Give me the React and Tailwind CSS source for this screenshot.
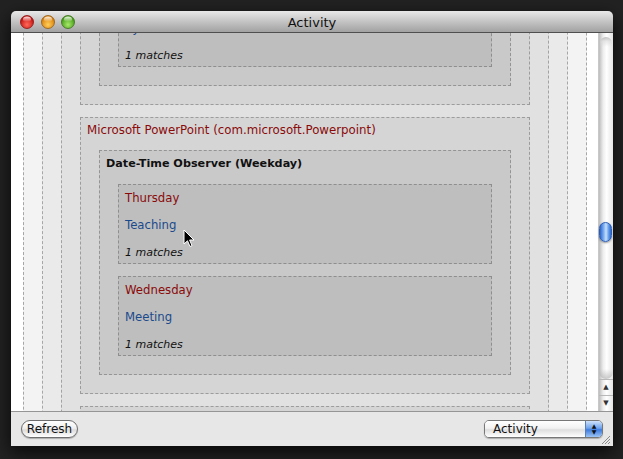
import React from 'react';

const Light = ({ from, to, rim }) => (
  <svg width="14" height="14" viewBox="0 0 14 14">
    <defs>
      <radialGradient id={`g${from}`} cx="50%" cy="70%" r="60%">
        <stop offset="0%" stopColor={from} />
        <stop offset="100%" stopColor={to} />
      </radialGradient>
      <linearGradient id={`h${from}`} x1="0" y1="0" x2="0" y2="1">
        <stop offset="0%" stopColor="#fff" stopOpacity="0.9" />
        <stop offset="100%" stopColor="#fff" stopOpacity="0" />
      </linearGradient>
    </defs>
    <circle cx="7" cy="7" r="6.5" fill={`url(#g${from})`} stroke={rim} strokeWidth="0.8" />
    <ellipse cx="7" cy="4.2" rx="4" ry="2.6" fill={`url(#h${from})`} />
  </svg>
);

const Entry = ({ day, activity, className }) => (
  <div className={`border border-dashed border-[#8e8e8e] bg-[#bebebe] pl-[6px] ${className}`}>
    <div className="h-[27px] flex items-center text-[11.7px] text-[#8a0a0a]">{day}</div>
    <div className="h-[27px] flex items-center text-[11.7px] text-[#1b4a8c]">{activity}</div>
    <div className="h-[24px] pt-[4px] flex items-center text-[11px] italic text-[#111]">1 matches</div>
  </div>
);

const Observer = ({ title, children }) => (
  <div className="mt-[7px] border border-dashed border-[#949494] bg-[#c9c9c9] px-[18px] pb-[18px]">
    <div className="h-[27px] -ml-[12px] flex items-center text-[11.2px] font-bold text-[#111]">{title}</div>
    <div className="mt-[6px]">{children}</div>
  </div>
);

const AppBox = ({ title, children, className }) => (
  <div className={`border border-dashed border-[#9c9c9c] bg-[#d5d5d5] px-[18px] pb-[18px] ${className}`}>
    <div className="h-[25px] -ml-[12px] flex items-center text-[11.8px] text-[#8a0a0a]">{title}</div>
    {children}
  </div>
);

export default function App() {
  return (
    <div className="w-[623px] h-[459px] bg-[#222222] pt-[11px] pl-[11px] font-['DejaVu_Sans',sans-serif] overflow-hidden">
      <div className="w-[602px] h-[435px] flex flex-col rounded-t-[5px] overflow-hidden shadow-[0_6px_18px_rgba(0,0,0,0.8)]">
        {/* title bar */}
        <div className="h-[22px] shrink-0 border-b border-[#4f4f4f] bg-gradient-to-b from-[#e9e9e9] via-[#c4c4c4] to-[#a2a2a2] grid grid-cols-[1fr_auto_1fr] items-center">
          <div className="flex items-center gap-[6.5px] pl-[9px]">
            <Light from="#ff6b5a" to="#c30d0d" rim="#8a1010" />
            <Light from="#ffcf5a" to="#d97c06" rim="#8f5a10" />
            <Light from="#a8e86a" to="#3f9a12" rim="#3c6d18" />
          </div>
          <div className="text-[13px] text-[#111] leading-none pt-[1px]">Activity</div>
          <div />
        </div>

        {/* content */}
        <div className="flex h-[378px] shrink-0">
          <div className="w-[587px] h-full overflow-hidden bg-white relative">
            <div className="mt-[-170px] pl-[12px] pr-[11px]">
              <div className="border border-dashed border-[#a6a6a6] bg-[#f3f3f3] px-[18px] pt-[18px]">
                <div className="border border-dashed border-[#a6a6a6] bg-[#eaeaea] px-[18px] pt-[18px]">
                  <div className="border border-dashed border-[#a2a2a2] bg-[#e1e1e1] px-[18px] pt-[18px] pb-[200px]">
                    <AppBox title="">
                      <Observer title="">
                        <Entry day="" activity="Synthesis" />
                      </Observer>
                    </AppBox>
                    <AppBox title="Microsoft PowerPoint (com.microsoft.Powerpoint)" className="mt-[12px]">
                      <Observer title="Date-Time Observer (Weekday)">
                        <Entry day="Thursday" activity="Teaching" />
                        <Entry day="Wednesday" activity="Meeting" className="mt-[12px]" />
                      </Observer>
                    </AppBox>
                    <div className="mt-[12px] h-[60px] border border-dashed border-[#9c9c9c] bg-[#d5d5d5]" />
                  </div>
                </div>
              </div>
            </div>
            {/* mouse pointer */}
            <svg className="absolute left-[172px] top-[196px]" width="12" height="19" viewBox="0 0 12 19">
              <path d="M1 1 L1 15 L4.5 11.8 L7 17.5 L9 16.6 L6.6 11 L11 11 Z" fill="#000" stroke="#fff" strokeWidth="1" strokeLinejoin="round" />
            </svg>
          </div>

          {/* scrollbar */}
          <div className="w-[15px] h-full flex flex-col bg-[linear-gradient(to_right,#bcbcbc,#eeeeee_30%,#ffffff_55%,#e4e4e4)] border-l border-[#c8c8c8]">
            <div className="h-[346px] relative">
              <div className="h-[10px] rounded-t-[7px] bg-[linear-gradient(to_bottom,#9a9a9a,#d8d8d8_40%,transparent)] mx-[1px] mt-[4px] opacity-60" />
              <div className="absolute left-[0px] top-[189px] w-[13px] h-[20px] rounded-full border border-[#2a5db8] bg-[linear-gradient(to_right,#2c63c9,#7fb1f4_35%,#c9e0fb_55%,#5d98ea_80%,#2e67cf)] shadow-[0_1px_2px_rgba(0,0,0,0.4)]" />
              <div className="absolute left-0 right-0 bottom-0 h-[10px] rounded-b-[7px] bg-[linear-gradient(to_top,#b0b0b0,transparent)] opacity-70" />
            </div>
            <div className="h-[16px] border-t border-[#b8b8b8] flex items-center justify-center text-[7px] text-[#333] leading-none">▲</div>
            <div className="h-[16px] border-t border-[#b8b8b8] flex items-center justify-center text-[7px] text-[#333] leading-none">▼</div>
          </div>
        </div>

        {/* bottom bar */}
        <div className="h-[35px] shrink-0 border-t border-[#959595] bg-[#e7e7e7] flex items-center justify-between pl-[10px] pr-[10px] relative">
          <button className="w-[57px] h-[18px] rounded-full border border-[#6e6e6e] bg-[linear-gradient(to_bottom,#ffffff,#f0f0f0_45%,#dcdcdc_55%,#ffffff)] shadow-[0_1px_1px_rgba(0,0,0,0.25)] text-[12px] text-[#111] leading-none flex items-center justify-center">
            Refresh
          </button>
          <div className="w-[119px] h-[18px] rounded-[5px] border border-[#777] flex overflow-hidden shadow-[0_1px_1px_rgba(0,0,0,0.25)]">
            <div className="flex-1 bg-[linear-gradient(to_bottom,#ffffff,#f2f2f2_45%,#dedede_55%,#ffffff)] text-[12px] text-[#111] leading-none flex items-center pl-[8px]">
              Activity
            </div>
            <div className="w-[17px] border-l border-[#5a7fb8] bg-[linear-gradient(to_bottom,#cfe2fb,#6ea2ec_45%,#3d7bdc_55%,#9cc4f5)] flex flex-col items-center justify-center text-[6px] leading-[6px] text-[#111]">
              <span>▲</span>
              <span>▼</span>
            </div>
          </div>
          <svg className="absolute right-[2px] bottom-[1px]" width="11" height="11" viewBox="0 0 11 11">
            <path d="M10 2 L2 10 M10 5 L5 10 M10 8 L8 10" stroke="#8a8a8a" strokeWidth="1" />
          </svg>
        </div>
      </div>
    </div>
  );
}
